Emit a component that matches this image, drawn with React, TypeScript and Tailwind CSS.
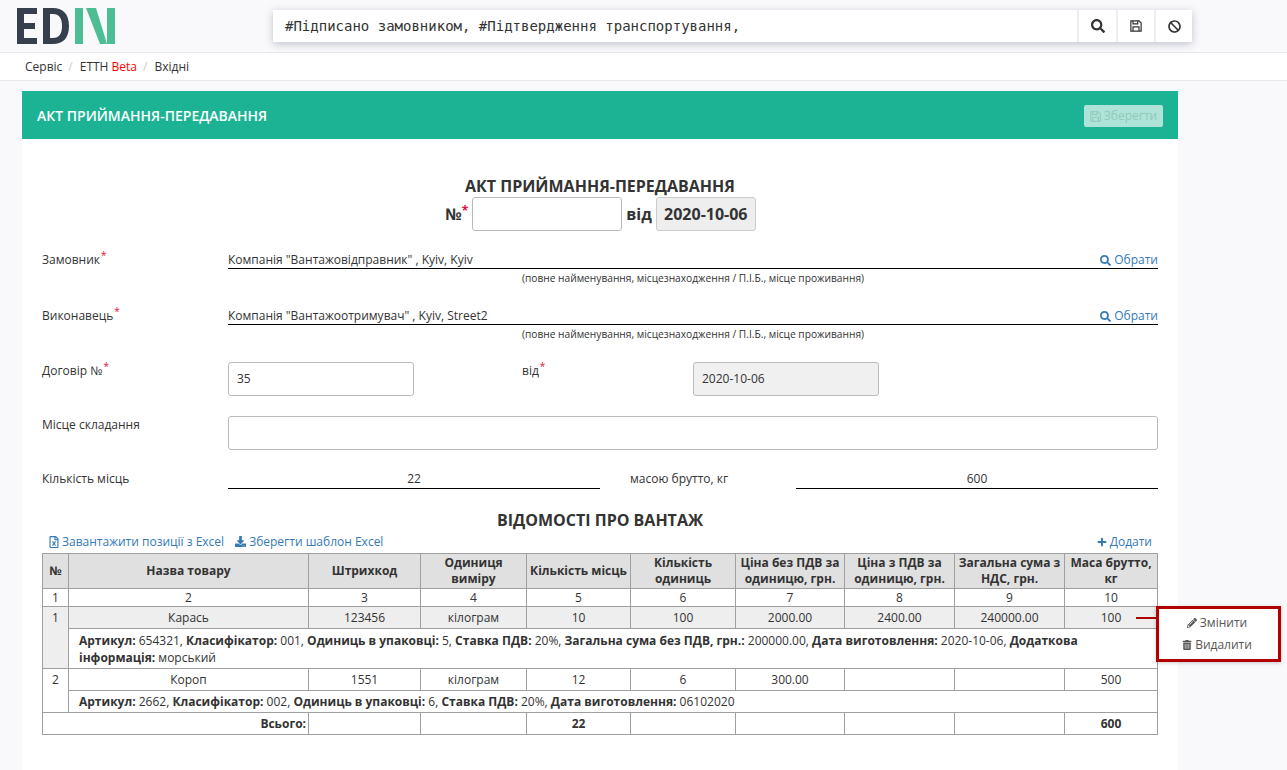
import React from 'react';
import { FaSearch, FaBan, FaPencilAlt, FaTrashAlt, FaPlus, FaDownload, FaRegFileExcel } from 'react-icons/fa';

function Logo() {
  return (
    <svg width="98" height="36" viewBox="0 0 98 36">
      <path d="M0 0h20v6H7v9h11v6H7v9h13v6H0z" fill="#363f4d" />
      <path fillRule="evenodd" d="M26 0h10c9 0 16 5 16 18s-7 18-16 18H26zM33 6v24h3c6 0 9-4 9-12S42 6 36 6z" fill="#363f4d" />
      <path d="M58 0h8v36h-8zM90 0h8v36h-8zM69 0h10l11 36h-7z" fill="#4dbd94" />
    </svg>
  );
}

// floppy outline, the fa-floppy-o look
function SaveIcon({ size }: { size: number }) {
  return (
    <svg width={size} height={size} viewBox="0 0 14 14" fill="none" stroke="currentColor" strokeWidth="1.4">
      <path d="M1 1h9.5L13 3.5V13H1z" />
      <path d="M3.5 1v3.5h5.5V1M3.5 13V8h7v5" />
    </svg>
  );
}

function Req() {
  return <sup className="text-[#e0103a] text-[10px] top-[-5px] leading-none relative align-baseline ml-px">*</sup>;
}

function PartyRow({ label, value }: { label: string; value: string }) {
  return (
    <div className="flex h-[56px]">
      <div className="w-[186px] shrink-0 pt-[8px]">
        {label}
        <Req />
      </div>
      <div className="flex-1">
        <div className="flex justify-between h-[26px] items-end border-b border-black">
          <span className="leading-[16px]">{value}</span>
          <a className="text-[#337ab7] flex items-center gap-[3px] leading-[16px]">
            <FaSearch className="text-[11px]" />
            Обрати
          </a>
        </div>
        <div className="text-center text-[10.2px] leading-[14px] mt-[2px]">
          (повне найменування, місцезнаходження / П.І.Б., місце проживання)
        </div>
      </div>
    </div>
  );
}

const widths = [26, 240, 112, 106, 104, 105, 109, 110, 110, 93];
const headers = ['№', 'Назва товару', 'Штрихкод', 'Одиниця виміру', 'Кількість місць', 'Кількість одиниць', 'Ціна без ПДВ за одиницю, грн.', 'Ціна з ПДВ за одиницю, грн.', 'Загальна сума з НДС, грн.', 'Маса брутто, кг'];

function Row({ cells, shade }: { cells: string[]; shade?: boolean }) {
  return (
    <>
      {cells.map((c, i) => (
        <td key={i} className={'border border-[#a0a0a0] text-center h-[22px] p-0 ' + (shade ? 'bg-[#eeeeee]' : '')}>
          {c}
        </td>
      ))}
    </>
  );
}

function B({ children }: { children: React.ReactNode }) {
  return <b className="font-bold">{children}</b>;
}

export default function App() {
  return (
    <div className="min-h-[770px] bg-[#f9f9fb] text-[12px] text-[#333] font-['Open_Sans',sans-serif]">
      <header className="h-[53px] border-b border-[#e7e7ec] flex pl-[17px] pt-[8px]">
        <Logo />
        <div className="ml-[158px] mt-[2px] w-[919px] h-[32px] bg-white shadow-[0_2px_8px_rgba(60,70,100,0.3)] flex">
          <div className="flex-1 pl-[12px] leading-[32px] text-[14px] font-['DejaVu_Sans_Mono',monospace]">
            #Підписано замовником, #Підтвердження транспортування,
          </div>
          <div className="w-[39px] border-l-2 border-[#eee] flex items-center justify-center text-[14px]"><FaSearch /></div>
          <div className="w-[38px] border-l-2 border-[#eee] flex items-center justify-center"><SaveIcon size={12} /></div>
          <div className="w-[38px] border-l-2 border-[#eee] flex items-center justify-center text-[13px]"><FaBan /></div>
        </div>
      </header>
      <nav className="h-[28px] bg-white border-b border-[#e7e7ec] pl-[25px] flex items-center">
        <span>Сервіс</span>
        <span className="text-[#ccc] ml-[6px] mr-[7px]">/</span>
        <span>ЕТТН <span className="text-[#f00]">Beta</span></span>
        <span className="text-[#ccc] ml-[6px] mr-[7px]">/</span>
        <span>Вхідні</span>
      </nav>

      <main className="ml-[22px] mt-[10px] w-[1156px]">
        <div className="h-[48px] bg-[#1bb394] flex items-center justify-between pl-[15px] pr-[15px]">
          <h1 className="text-white text-[14px] font-semibold">АКТ ПРИЙМАННЯ-ПЕРЕДАВАННЯ</h1>
          <button className="h-[22px] w-[79px] mt-[2px] rounded-[2px] bg-[#afe3d8] text-[#8fc9bd] flex items-center justify-center gap-[3px]">
            <SaveIcon size={11} />
            Зберегти
          </button>
        </div>
        <div className="bg-white px-[20px] pt-[37px] h-[631px]">
          <div className="text-center text-[16px] font-bold leading-[21px] text-[#333]">АКТ ПРИЙМАННЯ-ПЕРЕДАВАННЯ</div>
          <div className="flex justify-center items-center text-[16px] font-bold h-[34px] ml-[1px]">
            <span>№<sup className="text-[#e0103a] text-[12px] top-[-5px] leading-none relative align-baseline">*</sup></span>
            <div className="w-[150px] h-[34px] ml-[4px] bg-white border border-[#bbb] rounded-[3px]" />
            <span className="mx-[4px]">від</span>
            <div className="w-[100px] h-[34px] bg-[#eee] border border-[#ccc] rounded-[3px] flex items-center justify-center">2020-10-06</div>
          </div>

          <div className="mt-[12px]">
            <PartyRow label="Замовник" value='Компанія "Вантажовідправник" , Kyiv, Kyiv' />
            <PartyRow label="Виконавець" value='Компанія "Вантажоотримувач" , Kyiv, Street2' />
          </div>

          <div className="flex h-[54px] mt-[7px]">
            <div className="w-[186px]">Договір №<Req /></div>
            <div className="w-[186px] h-[34px] border border-[#bbb] rounded-[3px] pl-[8px] flex items-center">35</div>
            <div className="w-[279px] pl-[108px]">від<Req /></div>
            <div className="w-[186px] h-[34px] bg-[#f0f0f0] border border-[#bbb] rounded-[3px] pl-[8px] flex items-center">2020-10-06</div>
          </div>
          <div className="flex h-[34px]">
            <div className="w-[186px]">Місце складання</div>
            <div className="flex-1 border border-[#bbb] rounded-[3px]" />
          </div>

          <div className="flex mt-[19px] h-[20px]">
            <div className="w-[186px] pt-[1px]">Кількість місць</div>
            <div className="w-[372px] text-center border-b border-black pt-[1px]">22</div>
            <div className="w-[196px] pl-[30px] pt-[1px]">масою брутто, кг</div>
            <div className="flex-1 text-center border-b border-black pt-[1px]">600</div>
          </div>

          <div className="text-center text-[16px] font-bold mt-[22px] leading-[18px]">ВІДОМОСТІ ПРО ВАНТАЖ</div>
          <div className="flex justify-between text-[#337ab7] mt-[1px] h-[23px] leading-[18px] pl-[6px] pr-[6px]">
            <div className="flex gap-[11px]">
              <a className="flex items-center gap-[2px]"><FaRegFileExcel className="text-[12px]" />Завантажити позиції з Excel</a>
              <a className="flex items-center gap-[3px]"><FaDownload className="text-[11px]" />Зберегти шаблон Excel</a>
            </div>
            <a className="flex items-center gap-[3px]"><FaPlus className="text-[10px]" />Додати</a>
          </div>

          <div className="relative">
            <table className="table-fixed border-collapse w-[1115px] leading-[16px]">
              <colgroup>
                {widths.map((w, i) => <col key={i} style={{ width: w }} />)}
              </colgroup>
              <thead>
                <tr className="h-[35px]">
                  {headers.map((h) => (
                    <th key={h} className="border border-[#a0a0a0] bg-[#e0e0e0] font-bold p-0 text-center">{h}</th>
                  ))}
                </tr>
              </thead>
              <tbody>
                <tr className="h-[18px]">
                  {headers.map((_, i) => (
                    <td key={i} className="border border-[#a0a0a0] text-center p-0">{i + 1}</td>
                  ))}
                </tr>
                <tr>
                  <td rowSpan={2} className="border border-[#a0a0a0] bg-[#eeeeee] text-center align-top p-0 pt-[3px]">1</td>
                  <Row shade cells={['Карась', '123456', 'кілограм', '10', '100', '2000.00', '2400.00', '240000.00', '100']} />
                </tr>
                <tr className="h-[40px]">
                  <td colSpan={9} className="border border-[#a0a0a0] px-[10px] py-[2px] leading-[17px]">
                    <B>Артикул:</B> 654321, <B>Класифікатор:</B> 001, <B>Одиниць в упаковці:</B> 5, <B>Ставка ПДВ:</B> 20%, <B>Загальна сума без ПДВ, грн.:</B> 200000.00, <B>Дата виготовлення:</B> 2020-10-06, <B>Додаткова інформація:</B> морський
                  </td>
                </tr>
                <tr>
                  <td rowSpan={2} className="border border-[#a0a0a0] text-center align-top p-0 pt-[3px]">2</td>
                  <Row cells={['Короп', '1551', 'кілограм', '12', '6', '300.00', '', '', '500']} />
                </tr>
                <tr className="h-[22px]">
                  <td colSpan={9} className="border border-[#a0a0a0] px-[10px] py-0">
                    <B>Артикул:</B> 2662, <B>Класифікатор:</B> 002, <B>Одиниць в упаковці:</B> 6, <B>Ставка ПДВ:</B> 20%, <B>Дата виготовлення:</B> 06102020
                  </td>
                </tr>
                <tr className="h-[22px]">
                  <td colSpan={2} className="border border-[#a0a0a0] text-right font-bold p-0 pr-[2px]">Всього:</td>
                  <td className="border border-[#a0a0a0]" />
                  <td className="border border-[#a0a0a0]" />
                  <td className="border border-[#a0a0a0] text-center font-bold">22</td>
                  <td className="border border-[#a0a0a0]" />
                  <td className="border border-[#a0a0a0]" />
                  <td className="border border-[#a0a0a0]" />
                  <td className="border border-[#a0a0a0]" />
                  <td className="border border-[#a0a0a0] text-center font-bold">600</td>
                </tr>
              </tbody>
            </table>

            <div className="absolute left-[1094px] top-[64px] w-[22px] h-[2px] bg-[#b30000]" />
            <div className="absolute left-[1114px] top-[53px] w-[125px] h-[56px] bg-white border-[3px] border-[#b30000] shadow-[0_1px_4px_rgba(0,0,0,0.2)] flex flex-col items-center pt-[5px] pr-[3px] gap-[5px] text-[#555]">
              <span className="flex items-center gap-[3px] leading-[17px]"><FaPencilAlt className="text-[10px]" />Змінити</span>
              <span className="flex items-center gap-[3px] leading-[17px]"><FaTrashAlt className="text-[10px]" />Видалити</span>
            </div>
          </div>
        </div>
      </main>
    </div>
  );
}
